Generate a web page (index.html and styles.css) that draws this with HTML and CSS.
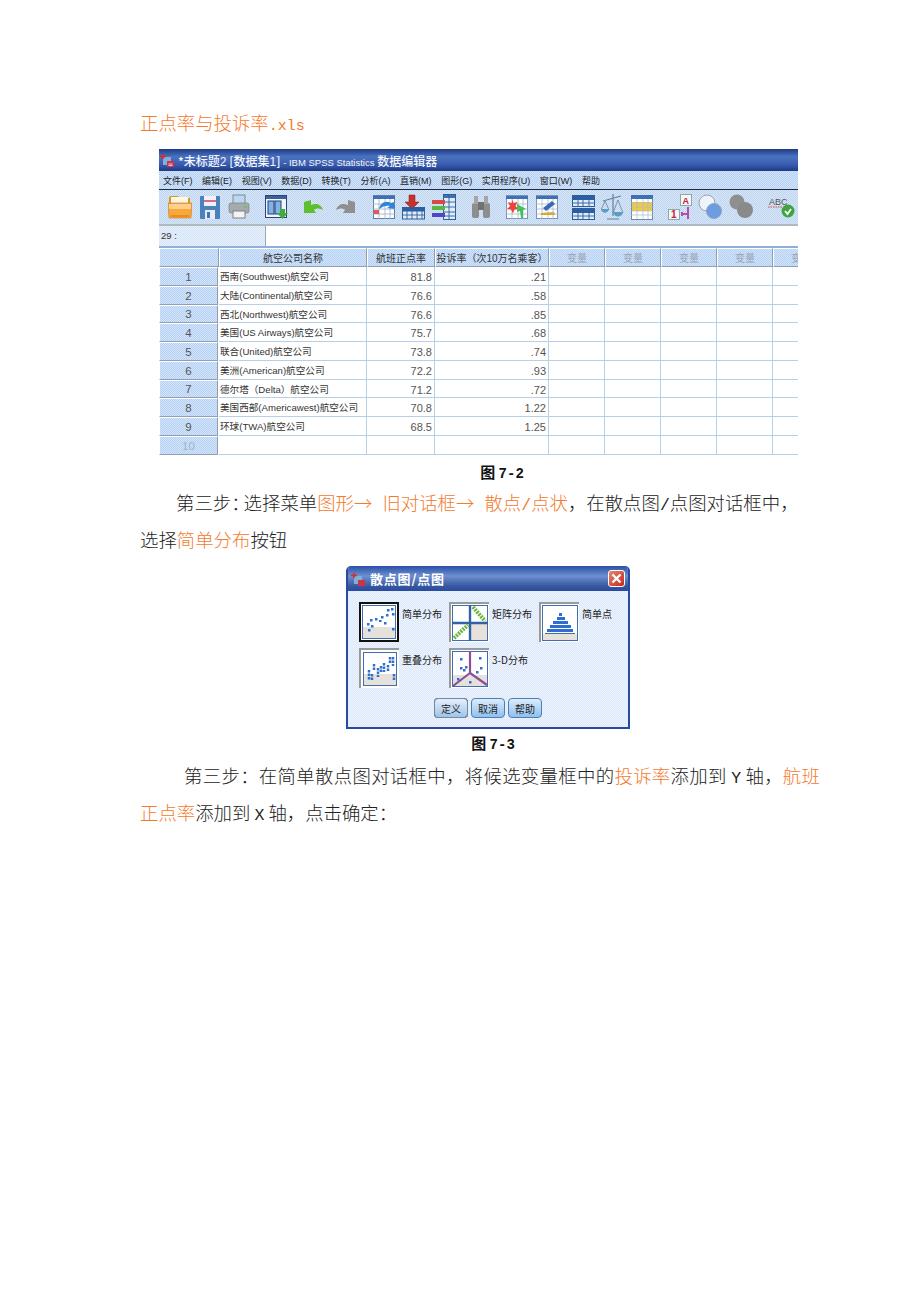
FILE: index.html
```html
<!DOCTYPE html>
<html lang="zh">
<head>
<meta charset="utf-8">
<title>正点率与投诉率</title>
<link rel="stylesheet" href="styles.css">
</head>
<body>
<main class="page">
  <p class="para file orange">正点率与投诉率<span class="latin">.xls</span></p>

  <section class="editor">
    <header class="ed-title">
      <svg class="app-icon" width="14" height="14" viewBox="0 0 14 14"><rect x="3" y="4" width="8" height="8" fill="#7fb0d8"/><rect x="7" y="8" width="7" height="6" fill="#c8344a"/><path d="M0 3.500h6M3 1v5" stroke="#e02828" stroke-width="1.600"/><path d="M8.500 11h4M8.500 12.500h4" stroke="#fff" stroke-width=".7"/></svg>
      <span class="ed-caption">*未标题<span class="num">2</span> [数据集<span class="num">1</span>] <span class="small">- IBM SPSS Statistics</span> 数据编辑器</span>
    </header>
    <nav class="ed-menu dither">
      <span>文件(F)</span><span>编辑(E)</span><span>视图(V)</span><span>数据(D)</span><span>转换(T)</span><span>分析(A)</span><span>直销(M)</span><span>图形(G)</span><span>实用程序(U)</span><span>窗口(W)</span><span>帮助</span>
    </nav>
    <div class="ed-tools dither">
      <svg width="24" height="28" viewBox="0 0 24 28"><path d="M1 5l1-2h8l2 2h10v6H1z" fill="#d8962c"/><rect x="3" y="4" width="17" height="7" fill="#fff6e2"/><path d="M0 10h24l-1 15H1z" fill="#f8a83a" stroke="#c47a1e" stroke-width=".6"/><path d="M1 11h22v5H1z" fill="#ffd08a"/><path d="M3 22h18v2H3z" fill="#f08a22"/></svg>
      <svg class="g2" width="20" height="28" viewBox="0 0 20 28"><rect y="3" width="20" height="23" rx="1" fill="#4a82bd"/><rect x="4" y="3" width="12" height="10" fill="#eef2f6"/><rect x="4" y="7" width="12" height="2" fill="#dd6a84"/><rect x="5" y="17" width="10" height="9" fill="#e8ecf0"/><rect x="7" y="19" width="3" height="6" fill="#3f78b5"/></svg>
      <svg class="g2" width="22" height="28" viewBox="0 0 22 28"><rect x="5" y="2" width="12" height="9" fill="#bcd8f0" stroke="#7a8a98"/><rect x="1" y="10" width="20" height="10" rx="2" fill="#a4aaae" stroke="#777" stroke-width=".6"/><rect x="5" y="18" width="12" height="7" fill="#f4f4f4" stroke="#808080"/><rect x="16" y="13" width="3" height="1.500" fill="#5c5"/></svg>
      <svg class="g9" width="23" height="28" viewBox="0 0 23 28"><rect x=".5" y="2.500" width="21" height="22" fill="#f2f5f9" stroke="#2b4480"/><rect x="1" y="3" width="20" height="3" fill="#3d5f9c"/><rect x="3" y="8" width="6" height="13" fill="#7fb4e4" stroke="#27407a"/><rect x="10" y="8" width="6" height="13" fill="#7fb4e4" stroke="#27407a"/><path d="M15 16h5v4h3l-5.500 6-5.500-6h3z" fill="#3eab3a"/></svg>
      <svg class="g9" width="21" height="28" viewBox="0 0 21 28"><path d="M8 7v5c5-2 10-1 12 5-4-2-7-2-9 0l2 3H1V9z" fill="#5ec02e"/></svg>
      <svg class="g5" width="21" height="28" viewBox="0 0 21 28"><path d="M13 7v5C8 10 3 11 1 17c4-2 7-2 9 0l-2 3h12V9z" fill="#8f8f8f"/></svg>
      <svg class="g11" width="23" height="28" viewBox="0 0 23 28"><rect x=".5" y="2.500" width="21" height="23" fill="#fff" stroke="#5a7fa8"/><path d="M0 3h22v3H0z" fill="#3f70b4"/><path d="M0 11h22M0 16h22M0 21h22M6 6v20M12 6v20M17 6v20" stroke="#9ab0c8" stroke-width=".8"/><rect x="1" y="17" width="5" height="4" fill="#e8555a"/><path d="M6 16c1-6 7-9 12-6l3-1 1 7-8-1 3-2c-3-1-7 0-11 3z" fill="#2f86d8"/></svg>
      <svg width="23" height="28" viewBox="0 0 23 28"><path d="M7 2h6v7h4l-7 7-7-7h4z" fill="#c8302a" stroke="#8a1e18" stroke-width=".5"/><rect x="0" y="14" width="23" height="4" fill="#2c5fa0"/><rect x=".5" y="18" width="22" height="8" fill="#e2ecf7" stroke="#2c5fa0"/><path d="M0 22h23M5 18v8M10 18v8M15 18v8M20 18v8" stroke="#2c5fa0" stroke-width=".9"/></svg>
      <svg width="25" height="28" viewBox="0 0 25 28"><rect x="12.500" y="1.500" width="12" height="25" fill="#e2ecf7" stroke="#2c5fa0"/><rect x="13" y="2" width="11" height="3" fill="#3f70b4"/><path d="M13 9h11M13 14h11M13 19h11M13 23h11M18 2v24" stroke="#2c5fa0" stroke-width=".9"/><path d="M1 7h13v4H1z" fill="#d84a4a"/><path d="M1 13h13v4H1z" fill="#58b83a"/><path d="M1 20h13v4H1z" fill="#5048c0"/></svg>
      <svg class="g9" width="20" height="28" viewBox="0 0 20 28"><rect x="1" y="10" width="7" height="15" rx="2" fill="#8e8e8e"/><rect x="12" y="10" width="7" height="15" rx="2" fill="#8e8e8e"/><rect x="3" y="3" width="4" height="8" fill="#a6a6a6"/><rect x="13" y="3" width="4" height="8" fill="#a6a6a6"/><rect x="7" y="9" width="6" height="8" fill="#727272"/></svg>
      <svg class="g9" width="22" height="28" viewBox="0 0 22 28"><rect x=".5" y="2.500" width="21" height="23" fill="#fff" stroke="#7a95b5"/><path d="M0 3h22v3H0z" fill="#3f70b4"/><path d="M0 11h22M0 16h22M0 21h22M6 6v20M12 6v20M17 6v20" stroke="#9ab0c8" stroke-width=".7"/><path d="M6 6l1.500 4 4-1-2 4 3 3-4 .5-1.500 4-2-4-4-.5 3-3-2-4 4 1z" fill="#f0423a"/><path d="M11 11l9 5-3 1 0 8-2 0-1-7-3 1z" fill="#45c05a"/></svg>
      <svg class="g2" width="22" height="28" viewBox="0 0 22 28"><rect x=".5" y="2.500" width="21" height="23" fill="#fff" stroke="#7a95b5"/><path d="M0 3h22v3H0z" fill="#3f70b4"/><path d="M0 11h22M0 16h22M0 21h22M6 6v20M12 6v20M17 6v20" stroke="#9ab0c8" stroke-width=".7"/><path d="M7 15l9-7 3 3-9 7z" fill="#3a68b8"/><path d="M5 20l13-1 1 3H5z" fill="#d8a830"/></svg>
      <svg class="g8" width="23" height="28" viewBox="0 0 23 28"><rect x=".5" y="2.500" width="22" height="11" fill="#e2ecf7" stroke="#2c5fa0"/><rect y="2" width="23" height="5" fill="#2c5fa0"/><path d="M0 10h23M6 7v7M11 7v7M17 7v7" stroke="#2c5fa0" stroke-width=".9"/><rect x=".5" y="15.500" width="22" height="11" fill="#e2ecf7" stroke="#2c5fa0"/><rect y="15" width="23" height="5" fill="#2c5fa0"/><path d="M0 23h23M6 20v7M11 20v7M17 20v7" stroke="#2c5fa0" stroke-width=".9"/></svg>
      <svg width="24" height="28" viewBox="0 0 24 28"><path d="M2 8L20 3M12 1v22M6 26h12" stroke="#64849c" stroke-width="1.200"/><path d="M0 17L4 8l4 9M12 20l5-13 5 13" fill="none" stroke="#64849c" stroke-width=".8"/><path d="M0 16c1 5 7 5 8 0z" fill="#5a9cc4"/><path d="M12 19c1 6 9 6 10 0z" fill="#5a9cc4"/></svg>
      <svg width="22" height="28" viewBox="0 0 22 28"><rect x=".5" y="2.500" width="21" height="24" fill="#fff" stroke="#6e8aa8"/><rect y="2" width="22" height="4" fill="#3f70b4"/><rect x="1" y="9" width="20" height="9" fill="#f4c93e"/><path d="M0 10h22M0 14h22M0 18h22M0 22h22M6 6v20M12 6v20M17 6v20" stroke="#a8bcd0" stroke-width=".7"/></svg>
      <svg class="g9" width="24" height="28" viewBox="0 0 24 28"><rect x="12.500" y="1.500" width="11" height="11" fill="#f7f7f7" stroke="#8aa"/><text class="ico-a" x="14.500" y="10.500">A</text><rect x=".5" y="16.500" width="11" height="10" fill="#f7f7f7" stroke="#8aa"/><text class="ico-1" x="3" y="25">1</text><path d="M20 14v12M20 21h-5M14 19v4" stroke="#b84aa8" stroke-width="2" fill="none"/></svg>
      <svg width="24" height="28" viewBox="0 0 24 28"><circle cx="9" cy="10" r="8" fill="#eef4fb" stroke="#9aa4b0"/><circle cx="16" cy="18" r="7.500" fill="#6d9ce0" stroke="#8aa4c8"/></svg>
      <svg class="g1" width="24" height="28" viewBox="0 0 24 28"><circle cx="8" cy="9" r="7.500" fill="#8f8f8f"/><circle cx="16" cy="17" r="8" fill="#8a8a8a"/></svg>
      <svg class="g9" width="27" height="28" viewBox="0 0 27 28"><text class="ico-abc" x="1" y="12">ABC</text><path d="M0 14h15" stroke="#d84a3a" stroke-dasharray="1.500 1"/><circle cx="20" cy="18" r="6.500" fill="#3fa53f"/><path d="M17 18l2.500 3 3.500-5" stroke="#fff" stroke-width="1.800" fill="none"/></svg>
    </div>
    <div class="ed-cell">
      <div class="ed-ref dither">29 :</div>
      <div class="ed-value"></div>
    </div>
    <div class="sheet">
      <div class="corner dither"></div><div class="head dither">航空公司名称</div><div class="head dither">航班正点率</div><div class="head dither">投诉率（次10万名乘客）</div><div class="head var dither">变量</div><div class="head var dither">变量</div><div class="head var dither">变量</div><div class="head var dither">变量</div><div class="head var dither">变量</div>

      <div class="rowno dither">1</div><div class="c">西南(Southwest)航空公司</div><div class="c n">81.8</div><div class="c n">.21</div><div class="c"></div><div class="c"></div><div class="c"></div><div class="c"></div><div class="c"></div>
      <div class="rowno dither">2</div><div class="c">大陆(Continental)航空公司</div><div class="c n">76.6</div><div class="c n">.58</div><div class="c"></div><div class="c"></div><div class="c"></div><div class="c"></div><div class="c"></div>
      <div class="rowno dither">3</div><div class="c">西北(Northwest)航空公司</div><div class="c n">76.6</div><div class="c n">.85</div><div class="c"></div><div class="c"></div><div class="c"></div><div class="c"></div><div class="c"></div>
      <div class="rowno dither">4</div><div class="c">美国(US Airways)航空公司</div><div class="c n">75.7</div><div class="c n">.68</div><div class="c"></div><div class="c"></div><div class="c"></div><div class="c"></div><div class="c"></div>
      <div class="rowno dither">5</div><div class="c">联合(United)航空公司</div><div class="c n">73.8</div><div class="c n">.74</div><div class="c"></div><div class="c"></div><div class="c"></div><div class="c"></div><div class="c"></div>
      <div class="rowno dither">6</div><div class="c">美洲(American)航空公司</div><div class="c n">72.2</div><div class="c n">.93</div><div class="c"></div><div class="c"></div><div class="c"></div><div class="c"></div><div class="c"></div>
      <div class="rowno dither">7</div><div class="c">德尔塔（Delta）航空公司</div><div class="c n">71.2</div><div class="c n">.72</div><div class="c"></div><div class="c"></div><div class="c"></div><div class="c"></div><div class="c"></div>
      <div class="rowno dither">8</div><div class="c">美国西部(Americawest)航空公司</div><div class="c n">70.8</div><div class="c n">1.22</div><div class="c"></div><div class="c"></div><div class="c"></div><div class="c"></div><div class="c"></div>
      <div class="rowno dither">9</div><div class="c">环球(TWA)航空公司</div><div class="c n">68.5</div><div class="c n">1.25</div><div class="c"></div><div class="c"></div><div class="c"></div><div class="c"></div><div class="c"></div>
      <div class="rowno off dither">10</div><div class="c"></div><div class="c"></div><div class="c"></div><div class="c"></div><div class="c"></div><div class="c"></div><div class="c"></div><div class="c"></div>
    </div>
  </section>

  <p class="caption cap-a">图 <span class="latin">7-2</span></p>

  <p class="para step-a">第三步<span class="colon">：</span>选择菜单<span class="orange arrows">图形→ 旧对话框→ 散点<span class="latin tall">/</span>点状</span>，在散点图<span class="latin tall">/</span>点图对话框中，<br>选择<span class="orange">简单分布</span>按钮</p>

  <section class="dialog dither">
    <header class="dlg-title">
      <svg class="app-icon" width="14" height="14" viewBox="0 0 14 14"><rect x="3" y="4" width="8" height="8" fill="#7fb0d8"/><rect x="7" y="8" width="7" height="6" fill="#c8344a"/><path d="M0 3.500h6M3 1v5" stroke="#e02828" stroke-width="1.600"/></svg>
      <span>散点图/点图</span>
      <span class="close">
        <svg width="11" height="11" viewBox="0 0 11 11"><path d="M1.500 1.500l8 8M9.500 1.500l-8 8" stroke="#fff" stroke-width="2.400"/></svg>
      </span>
    </header>
    <div class="dlg-grid">
      <div class="opt">
        <div class="thumb chosen"><svg width="34" height="34" viewBox="0 0 34 34"><rect x=".5" y=".5" width="33" height="33" fill="#fff" stroke="#3f6fb0"/><rect x="1" y="22" width="32" height="11" fill="#e6e1da"/><g fill="#2f6fd0"><rect x="6" y="24" width="2.500" height="2.500"/><rect x="9" y="20" width="2.500" height="2.500"/><rect x="5" y="18" width="2.500" height="2.500"/><rect x="8" y="14" width="2.500" height="2.500"/><rect x="13" y="13" width="2.500" height="2.500"/><rect x="17" y="15" width="2.500" height="2"/><rect x="19" y="11" width="2.500" height="2.500"/><rect x="22" y="17" width="2.500" height="2.500"/><rect x="24" y="9" width="2.500" height="2.500"/><rect x="25" y="4" width="2.500" height="2.500"/><rect x="29" y="3" width="2.500" height="2.500"/><rect x="30" y="8" width="2.500" height="2.500"/><rect x="30" y="23" width="2.500" height="2.500"/></g></svg></div>
        <span>简单分布</span>
      </div>
      <div class="opt">
        <div class="thumb"><svg width="36" height="36" viewBox="0 0 36 36"><rect x=".5" y=".5" width="35" height="35" fill="#fff" stroke="#3f6fb0"/><rect x="19" y="19" width="16" height="16" fill="#e6e1da"/><path d="M18 0v36M0 18h36" stroke="#2f62a8" stroke-width="2.400"/><path d="M21 2l12 14" stroke="#6ab83a" stroke-width="4" stroke-dasharray="2 1"/><path d="M2 33l14-13" stroke="#6ab83a" stroke-width="4" stroke-dasharray="2 1"/></svg></div>
        <span>矩阵分布</span>
      </div>
      <div class="opt">
        <div class="thumb"><svg width="36" height="36" viewBox="0 0 36 36"><rect x=".5" y=".5" width="35" height="35" fill="#fff" stroke="#3f6fb0"/><rect x="1" y="29" width="34" height="6" fill="#e6e1da"/><path d="M3 28.500h30" stroke="#3f6fb0"/><g fill="#2f6fd0"><rect x="5" y="24" width="26" height="3"/><rect x="8" y="20" width="21" height="3"/><rect x="11" y="16" width="15" height="3"/><rect x="15" y="12" width="8" height="3"/><rect x="17" y="8" width="3" height="3"/></g></svg></div>
        <span>简单点</span>
      </div>
      <div class="opt">
        <div class="thumb"><svg width="34" height="34" viewBox="0 0 34 34"><rect x=".5" y=".5" width="33" height="33" fill="#fff" stroke="#3f6fb0"/><rect x="1" y="22" width="32" height="11" fill="#e6e1da"/><path d="M6 18v10M9 22v7M11 12v6M15 16v9M18 14v6M21 11v9M25 13v6M27 5v6M30 5v9M31 22v6" stroke="#2f6fd0" stroke-width="2.500" stroke-dasharray="2.500 1" fill="none"/></svg></div>
        <span>重叠分布</span>
      </div>
      <div class="opt">
        <div class="thumb"><svg width="36" height="36" viewBox="0 0 36 36"><rect x=".5" y=".5" width="35" height="35" fill="#fff" stroke="#3f6fb0"/><rect x="1" y="24" width="34" height="11" fill="#e6e1da"/><path d="M18 0v22M18 22L1 35M18 22l17 12" stroke="#8a4f9a" stroke-width="2.200" fill="none"/><g fill="#2f6fd0"><rect x="8" y="7" width="2.500" height="2.500"/><rect x="8" y="16" width="2.500" height="2.500"/><rect x="11" y="18" width="2.500" height="2.500"/><rect x="13" y="15" width="2.500" height="2.500"/><rect x="5" y="27" width="2.500" height="2.500"/><rect x="27" y="6" width="2.500" height="2.500"/><rect x="28" y="16" width="2.500" height="2.500"/><rect x="24" y="20" width="2.500" height="2.500"/><rect x="17" y="30" width="2.500" height="2.500"/></g></svg></div>
        <span>3-D分布</span>
      </div>
    </div>
    <div class="dlg-actions">
      <button class="btn focus">定义</button><button class="btn">取消</button><button class="btn">帮助</button>
    </div>
  </section>

  <p class="caption cap-b">图 <span class="latin">7-3</span></p>

  <p class="para step-b">第三步：在简单散点图对话框中，将候选变量框中的<span class="orange">投诉率</span>添加到 <span class="latin tall">Y</span> 轴，<span class="orange">航班正点率</span>添加到 <span class="latin tall">X</span> 轴，点击确定：</p>
</main>
</body>
</html>
```

FILE: styles.css
```css
* { box-sizing: border-box; }
html, body { margin: 0; padding: 0; background: #fff; }
body { font-family: "Noto Sans CJK SC", "Liberation Sans", sans-serif; color: #222; }
.page { width: 920px; height: 1302px; padding: 104px 100px 0 140px; overflow: hidden; }

.dither { background-image: conic-gradient(#fff0 25%, #ffffff70 0 50%, #fff0 0 75%, #ffffff70 0); background-size: 2px 2px; }

.para { margin: 0; font-size: 18.4px; line-height: 37px; font-weight: 300; }
.latin { font-family: "Liberation Mono", monospace; font-size: 15px; line-height: 1; }
.latin.tall { font-size: 16.5px; }
.orange { color: #f47a2c; }
.file { height: 37px; }
.colon { letter-spacing: -6px; }
.arrows { word-spacing: 6px; }
.step-a { margin-top: 2px; text-indent: 36px; white-space: nowrap; }
.step-b { margin-top: 0; text-indent: 44px; width: 680px; text-align: justify; }

.caption { margin: 0; text-align: center; font-size: 15px; line-height: 20px; font-weight: 700; color: #111; }
.caption .latin { font-size: 14px; }
.cap-a { margin-top: 5px; width: 724px; }
.cap-b { margin-top: 4px; width: 706px; height: 20px; margin-bottom: 4px; }

/* editor screenshot */
.editor { width: 639px; margin: 8px 0 0 19px; height: 308px; display: flex; flex-direction: column; overflow: hidden; background: #fff; }
.ed-title { height: 22px; flex: none; display: flex; align-items: center; gap: 4px; padding-left: 1px; color: #f4f6fb; font-size: 12px; font-weight: 500; background: linear-gradient(#1f3a86, #4a72c0 35%, #3a5cb0 70%, #1f3a86); white-space: nowrap; }
.small { font-family: "Liberation Sans", sans-serif; font-size: 9.5px; }
.num { font-family: "Liberation Sans", sans-serif; font-size: 12px; }
.app-icon { flex: none; }
.ed-menu { height: 19px; flex: none; display: flex; gap: 9.600px; padding-left: 4px; align-items: center; font-family: "Liberation Sans", "Noto Sans CJK SC", sans-serif; font-size: 9px; color: #222; background-color: #b4d0f5; border-bottom: 1px solid #1d2a44; white-space: nowrap; }
.ed-tools { height: 36px; flex: none; display: flex; align-items: center; padding-left: 9px; gap: 6px; background-color: #bcd4f0; border-bottom: 2px solid #b0b8c0; }
.ed-tools svg { flex: none; }
.ed-tools .g1 { margin-left: 1px; }
.ed-tools .g2 { margin-left: 2px; }
.ed-tools .g5 { margin-left: 5px; }
.ed-tools .g8 { margin-left: 8px; }
.ed-tools .g9 { margin-left: 9px; }
.ed-tools .g11 { margin-left: 11px; }
.ico-a { font: 700 9px "Liberation Sans", sans-serif; fill: #c8203a; }
.ico-1 { font: 700 10px "Liberation Sans", sans-serif; fill: #c8203a; }
.ico-abc { font: 400 9px "Liberation Sans", sans-serif; fill: #555; }
.ed-cell { height: 22px; flex: none; display: flex; background: #fff; border-bottom: 2px solid #8fb0d8; }
.ed-ref { width: 107px; background-color: #d4e4f8; border-right: 1px solid #9aa8b8; font: 9.500px/20px "Liberation Sans", sans-serif; padding-left: 2px; color: #333; }
.ed-value { flex: 1; }

.sheet { display: grid; grid-template-columns: 60px 148px 68px 114px 56px 56px 56px 56px 56px; grid-template-rows: 19px; grid-auto-rows: 18.75px; font-family: "Liberation Sans", "Noto Sans CJK SC", sans-serif; font-size: 10px; color: #333; }
.corner, .head, .rowno { background-color: #b4d0f5; border: 1px solid #fff; border-right-color: #8f9fb0; border-bottom-color: #8f9fb0; display: flex; align-items: center; justify-content: center; white-space: nowrap; overflow: hidden; }
.var { color: #9aa6b4; }
.rowno { font-size: 11.500px; margin-right: 1px; padding-top: 1px; color: #555; }
.rowno.off { color: #a8b4c4; }
.c { border-right: 1px solid #b8cfea; border-bottom: 1px solid #b8cfea; padding: 1px 1px 0; font-size: 9.600px; line-height: 18px; white-space: nowrap; overflow: hidden; }
.n { text-align: right; font-size: 11px; padding-right: 2px; color: #555; }

/* dialog */
.dialog { width: 284px; height: 163px; margin: 8px 0 0 206px; display: flex; flex-direction: column; background-color: #dde9fa; border: 2px solid #2a4aa0; border-top: 0; border-radius: 5px 5px 0 0; overflow: hidden; }
.dlg-title { height: 25px; flex: none; display: flex; align-items: center; gap: 5px; padding: 0 3px; color: #fff; font-size: 13px; font-weight: 700; letter-spacing: .8px; background: linear-gradient(#2a4fa6, #6e8fd0 40%, #37589f 80%, #2a4aa0); }
.close { margin-left: auto; width: 17px; height: 17px; border-radius: 3px; background: linear-gradient(135deg, #e88a70, #c8261a); border: 1px solid #fff; display: flex; align-items: center; justify-content: center; }
.dlg-grid { display: grid; grid-template-columns: 90px 90px 90px; grid-auto-rows: 46px; padding: 11px 0 0 11px; }
.opt { display: flex; gap: 3px; align-items: flex-start; font-size: 10px; line-height: 14px; color: #222; white-space: nowrap; }
.opt span { margin-top: 5px; }
.thumb { width: 40px; height: 40px; background: #fff; border-top: 2px solid #9a9a9a; border-left: 2px solid #9a9a9a; display: flex; align-items: center; justify-content: center; flex: none; }
.thumb.chosen { border: 2px solid #111; }
.dlg-actions { display: flex; gap: 3px; padding: 4px 0 0 86px; }
.btn { width: 34px; height: 20px; padding: 0; font: 10px "Noto Sans CJK SC", sans-serif; color: #222; background: linear-gradient(#dcecfb, #8fc0ee); border: 1px solid #4a7fb8; border-radius: 4px; }
.btn.focus { border: 1px dotted #222; outline: 1px solid #6f8aa8; outline-offset: -1px; background: linear-gradient(#e4effa, #a0c4e8); }
```
